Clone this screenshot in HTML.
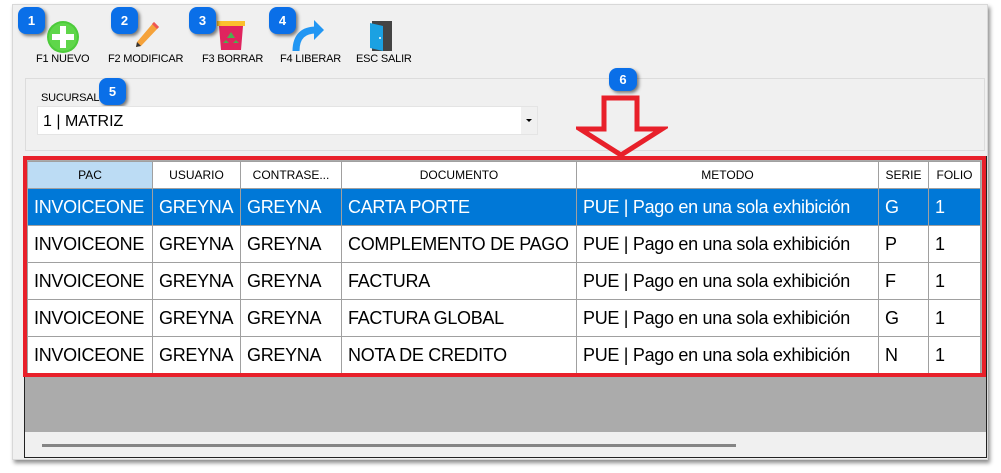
<!DOCTYPE html>
<html><head><style>
*{margin:0;padding:0;box-sizing:border-box}
body{width:1001px;height:473px;background:#fff;position:relative;overflow:hidden;font-family:"Liberation Sans",sans-serif}
.win{position:absolute;left:12px;top:4px;width:976px;height:456px;background:#f0f0f0;border:1px solid #d8d8d8;box-shadow:2px 3px 4px rgba(0,0,0,.45)}
.ab{position:absolute}
.lbl{position:absolute;font-size:11px;color:#000;white-space:nowrap;letter-spacing:-0.2px}
.badge{position:absolute;width:27px;height:27px;border-radius:8px;background:#0a6fe8;color:#fff;font-size:13px;font-weight:bold;text-align:center;line-height:27px;box-shadow:2px 2px 3px rgba(0,0,0,.5)}
table{border-collapse:collapse;position:absolute;left:27px;top:161px;table-layout:fixed}
td,th{border:1px solid #a0a0a0;white-space:nowrap;overflow:hidden}
th{height:27px;font-weight:normal;font-size:12px;background:#fff;text-align:center}
td{height:37px;font-size:18px;padding-left:6px;background:#fff;letter-spacing:-0.3px}
tr.sel td{background:#0078d7;color:#fff}
</style></head><body>
<div class="win"></div>
<svg class="ab" style="left:46px;top:20px" width="34" height="34"><circle cx="17" cy="17" r="16" fill="#4ccb3a"/><circle cx="17" cy="17" r="14" fill="#5fd64a"/><rect x="14" y="6" width="6" height="22" fill="#fff"/><rect x="6" y="14" width="22" height="6" fill="#fff"/></svg>
<svg class="ab" style="left:132px;top:20px" width="28" height="30"><path d="M22 2 L27 7 L9 26 L4 27 L5 22 Z" fill="#f5a23a"/><path d="M22 2 L27 7 L25 9 L20 4Z" fill="#e55"/><path d="M4 27 L5 22 L9 26Z" fill="#333"/></svg>
<svg class="ab" style="left:216px;top:18px" width="30" height="34"><rect x="1" y="3" width="28" height="5" fill="#fbc02d"/><path d="M3 8 H27 L25 32 H5Z" fill="#e0245e"/><path d="M15 14 L19 20 H11Z" fill="#4caf50"/><path d="M10 22 l3 3 h-6z M20 22 l3 3 h-6z" fill="#4caf50"/></svg>
<svg class="ab" style="left:290px;top:18px" width="36" height="34"><path d="M6 33 C6 18 14 12 26 12" stroke="#2196f3" stroke-width="7" fill="none"/><path d="M24 2 L34 12 L24 22Z" fill="#2196f3"/></svg>
<svg class="ab" style="left:366px;top:20px" width="28" height="32"><rect x="6" y="1" width="20" height="30" fill="#444"/><path d="M4 3 L17 6 L17 31 L4 28Z" fill="#1ba1e2"/><circle cx="14" cy="18" r="1" fill="#fff"/></svg>
<div class="lbl" style="left:36px;top:53px">F1 NUEVO</div>
<div class="lbl" style="left:108px;top:53px">F2 MODIFICAR</div>
<div class="lbl" style="left:202px;top:53px">F3 BORRAR</div>
<div class="lbl" style="left:280px;top:53px">F4 LIBERAR</div>
<div class="lbl" style="left:356px;top:53px">ESC SALIR</div>
<div class="badge" style="left:18px;top:7px">1</div>
<div class="badge" style="left:111px;top:7px">2</div>
<div class="badge" style="left:189px;top:7px">3</div>
<div class="badge" style="left:269px;top:7px">4</div>
<div class="ab" style="left:25px;top:78px;width:960px;height:73px;border:1px solid #dcdcdc"></div>
<div class="lbl" style="left:41px;top:92px">SUCURSAL</div>
<div class="badge" style="left:99px;top:78px">5</div>
<div class="ab" style="left:37px;top:106px;width:501px;height:29px;background:#fff;border:1px solid #e4e4e4"></div>
<div class="ab" style="left:521px;top:107px;width:16px;height:27px;background:#f0f0f0"></div>
<div class="ab" style="left:526px;top:119px;border:3px solid transparent;border-top:3px solid #000"></div>
<div class="ab" style="left:43px;top:113px;font-size:16px">1 | MATRIZ</div>
<div class="badge" style="left:609px;top:68px;width:28px;height:23px;line-height:23px">6</div>
<svg class="ab" style="left:576px;top:94px" width="92" height="64"><path d="M28 4 H61 V35 H86 L45 61 L4 35 H28Z" fill="none" stroke="#e8202a" stroke-width="5"/></svg>
<div class="ab" style="left:24px;top:156px;width:963px;height:302px;border:1px solid #222;background:#ababab"></div>
<div class="ab" style="left:25px;top:432px;width:961px;height:25px;background:#f0f0f0"></div>
<div class="ab" style="left:42px;top:444px;width:694px;height:3px;background:#858585"></div>
<table>
<colgroup><col style="width:125px"><col style="width:88px"><col style="width:101px"><col style="width:235px"><col style="width:302px"><col style="width:50px"><col style="width:52px"></colgroup>
<tr><th style="background:#bcdcf4">PAC</th><th>USUARIO</th><th>CONTRASE...</th><th>DOCUMENTO</th><th>METODO</th><th>SERIE</th><th>FOLIO</th></tr>
<tr class="sel"><td>INVOICEONE</td><td>GREYNA</td><td>GREYNA</td><td>CARTA PORTE</td><td>PUE | Pago en una sola exhibición</td><td>G</td><td>1</td></tr>
<tr><td>INVOICEONE</td><td>GREYNA</td><td>GREYNA</td><td>COMPLEMENTO DE PAGO</td><td>PUE | Pago en una sola exhibición</td><td>P</td><td>1</td></tr>
<tr><td>INVOICEONE</td><td>GREYNA</td><td>GREYNA</td><td>FACTURA</td><td>PUE | Pago en una sola exhibición</td><td>F</td><td>1</td></tr>
<tr><td>INVOICEONE</td><td>GREYNA</td><td>GREYNA</td><td>FACTURA GLOBAL</td><td>PUE | Pago en una sola exhibición</td><td>G</td><td>1</td></tr>
<tr><td>INVOICEONE</td><td>GREYNA</td><td>GREYNA</td><td>NOTA DE CREDITO</td><td>PUE | Pago en una sola exhibición</td><td>N</td><td>1</td></tr>
</table>
<div class="ab" style="left:23px;top:156px;width:963px;height:221px;border:4px solid #e8202a"></div>
</body></html>
